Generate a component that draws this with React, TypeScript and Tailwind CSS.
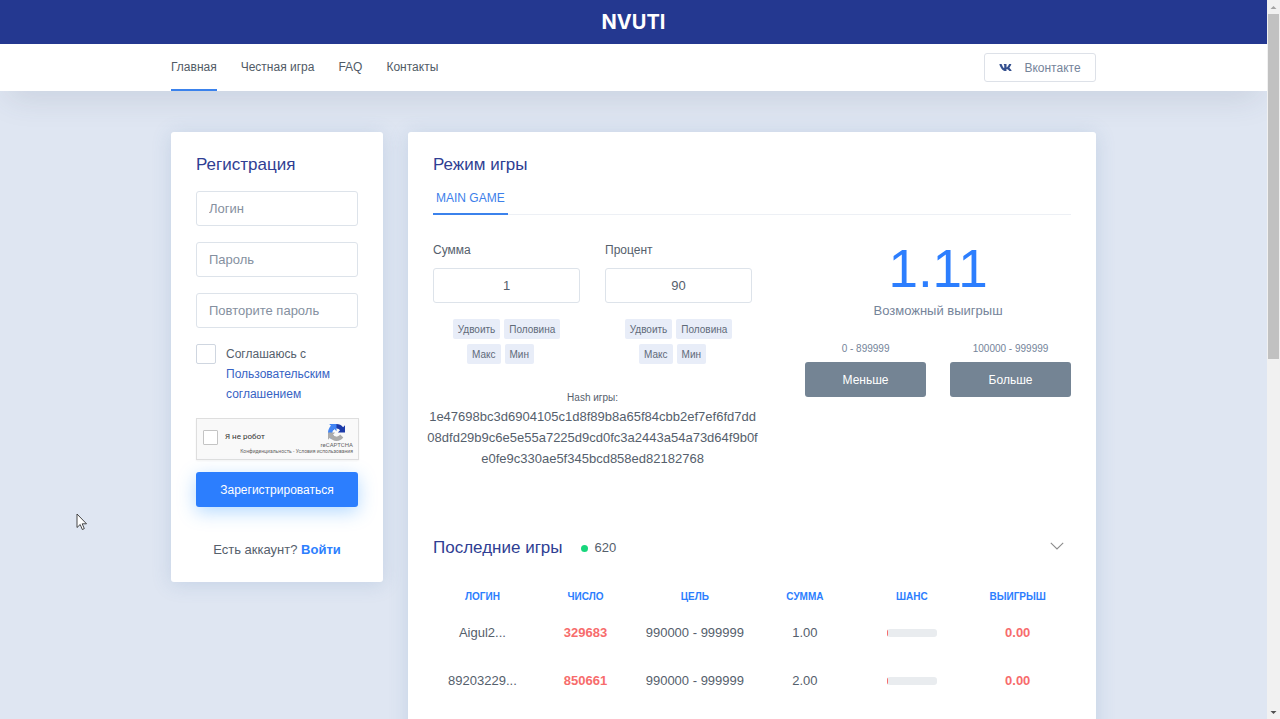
import { useState } from "react";
import { FaVk } from "react-icons/fa";

type Game = {
  login: string;
  number: string;
  target: string;
  sum: string;
  chance: number;
  win: string;
};

const NAV = ["Главная", "Честная игра", "FAQ", "Контакты"];

const GAMES: Game[] = [
  { login: "Aigul2...", number: "329683", target: "990000 - 999999", sum: "1.00", chance: 1, win: "0.00" },
  { login: "89203229...", number: "850661", target: "990000 - 999999", sum: "2.00", chance: 1, win: "0.00" },
];

const HASH_LINES = [
  "1e47698bc3d6904105c1d8f89b8a65f84cbb2ef7ef6fd7dd",
  "08dfd29b9c6e5e55a7225d9cd0fc3a2443a54a73d64f9b0f",
  "e0fe9c330ae5f345bcd858ed82182768",
];

const FIELD =
  "block h-[35px] w-full rounded-[3px] border border-[#dde3ea] bg-white text-[13px] text-[#55606c] outline-none placeholder:text-[#8590a0]";

const CARD = "rounded-[3px] bg-white shadow-[0_2px_20px_rgba(70,115,170,0.18)]";

const CHIP = "h-5 rounded-[2px] bg-[#e8edf8] px-[5px] text-[10px] text-[#5f6a78]";

function Header() {
  return (
    <header>
      <div className="relative z-10 flex h-11 items-center justify-center bg-[#243890]">
        <a href="#" className="font-['Inter',sans-serif] text-xl leading-7 font-bold text-white">
          NVUTI
        </a>
      </div>
      <div className="bg-white shadow-[0_14px_32px_-8px_rgba(60,75,100,0.15)]">
        <div className="mx-auto flex h-[47px] max-w-[925px] items-center justify-between">
          <nav className="flex h-full gap-6 text-xs text-[#515b66]">
            {NAV.map((item, i) => (
              <a
                key={item}
                href="#"
                className={`flex items-center border-b-2 ${i === 0 ? "border-[#3b82ec]" : "border-transparent"}`}
              >
                {item}
              </a>
            ))}
          </nav>
          <a
            href="#"
            className="flex h-[29px] w-28 items-center justify-center gap-3 rounded-[3px] border border-[#dde1e8] text-xs text-[#75849a]"
          >
            <FaVk className="size-[13px] text-[#34508f]" />
            Вконтакте
          </a>
        </div>
      </div>
    </header>
  );
}

function CaptchaLogo() {
  return (
    <svg viewBox="0 0 64 64" className="size-[17px]" aria-hidden="true">
      <path
        d="M64 31.950a33 33 0 0 0-.030-1.370V4.600l-7.180 7.180A31.900 31.900 0 0 0 32.100 0C21.600 0 12.300 5 6.500 12.800l11.770 11.900a15.600 15.600 0 0 1 4.770-5.350c2.060-1.610 4.970-2.920 9-2.920.490 0 .860.060 1.140.160a15.800 15.800 0 0 1 12.200 7.290l-8.330 8.330z"
        fill="#1c3aa9"
      />
      <path
        d="M31.860.010 4.600.040l7.180 7.180A31.900 31.900 0 0 0 0 31.910c0 10.500 5 19.800 12.800 25.600l11.900-11.770a15.600 15.600 0 0 1-5.350-4.770c-1.610-2.060-2.920-4.970-2.920-9 0-.490.060-.860.160-1.140a15.800 15.800 0 0 1 7.290-12.200l8.330 8.330z"
        fill="#4285f4"
      />
      <path
        d="M.010 32v27.360l7.180-7.180A31.900 31.900 0 0 0 31.880 64c10.500 0 19.800-5 25.600-12.800L45.710 39.300a15.600 15.600 0 0 1-4.770 5.350c-2.060 1.610-4.970 2.920-9 2.920-.490 0-.860-.060-1.140-.160a15.800 15.800 0 0 1-12.200-7.290l8.330-8.330z"
        fill="#ababab"
      />
    </svg>
  );
}

function Registration() {
  return (
    <section className={`w-[212px] shrink-0 px-[25px] pt-[21px] pb-[21px] ${CARD}`}>
      <h2 className="text-[17px] leading-6 text-[#2f3e93]">Регистрация</h2>
      <form className="mt-3.5" onSubmit={(e) => e.preventDefault()}>
        <div className="flex flex-col gap-4">
          <input className={`${FIELD} px-3`} type="text" placeholder="Логин" aria-label="Логин" />
          <input className={`${FIELD} px-3`} type="password" placeholder="Пароль" aria-label="Пароль" />
          <input
            className={`${FIELD} px-3`}
            type="password"
            placeholder="Повторите пароль"
            aria-label="Повторите пароль"
          />
        </div>
        <div className="mt-4 flex gap-2.5 text-xs leading-5 text-[#55606c]">
          <input
            id="terms"
            type="checkbox"
            className="size-5 shrink-0 appearance-none rounded-[2px] border border-[#cfd6e0] bg-white checked:bg-[#2c7efe]"
          />
          <label htmlFor="terms">
            Соглашаюсь с{" "}
            <a href="#" className="text-[#3763c4]">
              Пользовательским соглашением
            </a>
          </label>
        </div>
        <div className="mt-3.5 -mr-px flex h-[42px] border border-[#dedede] bg-[#f9f9f9] font-['Roboto',sans-serif] shadow-xs">
          <label className="flex flex-1 items-center gap-[7px] pb-1 pl-1.5 text-[8px] whitespace-nowrap text-[#333]">
            <input
              type="checkbox"
              className="size-[15px] appearance-none rounded-[1px] border border-[#c4c4c4] bg-white checked:bg-[#2c7efe]"
            />
            Я не робот
          </label>
          <div className="flex flex-col items-end pt-[5px] pr-[5px] text-[#666]">
            <div className="flex flex-col items-center">
              <CaptchaLogo />
              <span className="mt-px text-[6px] leading-[6px]">reCAPTCHA</span>
            </div>
            <p className="-ml-24 text-[5px] leading-[7px] whitespace-nowrap">
              <a href="#">Конфиденциальность</a> - <a href="#">Условия использования</a>
            </p>
          </div>
        </div>
        <button
          type="submit"
          className="mt-3 h-[35px] w-full rounded-[3px] bg-[#2c7efe] text-xs text-white shadow-[0_5px_18px_rgba(44,150,255,0.35)]"
        >
          Зарегистрироваться
        </button>
      </form>
      <p className="mt-8 text-center text-[13px] leading-[22px] text-[#55606c]">
        Есть аккаунт?{" "}
        <a href="#" className="font-bold text-[#2c7efe]">
          Войти
        </a>
      </p>
    </section>
  );
}

function BetField({ id, label, initial }: { id: string; label: string; initial: string }) {
  const [value, setValue] = useState(initial);
  return (
    <div>
      <label htmlFor={id} className="block text-xs leading-5 text-[#55606c]">
        {label}
      </label>
      <input
        id={id}
        type="text"
        value={value}
        onChange={(e) => setValue(e.target.value)}
        className={`${FIELD} mt-2 text-center`}
      />
      <div className="mt-4 flex justify-center gap-1">
        <button type="button" className={CHIP}>
          Удвоить
        </button>
        <button type="button" className={CHIP}>
          Половина
        </button>
      </div>
      <div className="mt-[5px] flex justify-center gap-1 pr-3">
        <button type="button" className={CHIP}>
          Макс
        </button>
        <button type="button" className={CHIP}>
          Мин
        </button>
      </div>
    </div>
  );
}

function GameMode() {
  return (
    <section>
      <h2 className="text-[17px] leading-6 text-[#2f3e93]">Режим игры</h2>
      <div className="mt-[9px] flex border-b border-[#edf0f5]">
        <button
          type="button"
          className="-mb-px h-[29px] border-b-2 border-[#3b82ec] px-[3px] pb-1 text-xs text-[#3d80ea]"
        >
          MAIN GAME
        </button>
      </div>
      <div className="mt-[25px] grid grid-cols-[6fr_5fr] gap-[53px]">
        <div className="min-w-0">
          <div className="grid grid-cols-2 gap-[25px]">
            <BetField id="sum" label="Сумма" initial="1" />
            <BetField id="percent" label="Процент" initial="90" />
          </div>
          <div className="-mx-5 mt-[26px] text-center text-[#55606c]">
            <p className="text-[10px] leading-4">Hash игры:</p>
            <p className="text-[13px] leading-[21px]">
              {HASH_LINES.map((line) => (
                <span key={line} className="block">
                  {line}
                </span>
              ))}
            </p>
          </div>
        </div>
        <div className="text-center text-[#75849a]">
          <p className="pb-1 text-[53px] leading-[57px] text-[#2c7efe]">1.11</p>
          <p className="text-[13px] leading-5">Возможный выигрыш</p>
          <div className="mt-5 grid grid-cols-2 gap-6">
            <div>
              <p className="text-[10px] leading-4">0 - 899999</p>
              <button type="button" className="mt-[5px] h-[35px] w-full rounded-[3px] bg-[#748494] text-xs text-white">
                Меньше
              </button>
            </div>
            <div>
              <p className="text-[10px] leading-4">100000 - 999999</p>
              <button type="button" className="mt-[5px] h-[35px] w-full rounded-[3px] bg-[#748494] text-xs text-white">
                Больше
              </button>
            </div>
          </div>
        </div>
      </div>
    </section>
  );
}

function LastGames() {
  return (
    <section className="mt-[67px]">
      <div className="flex items-center">
        <h2 className="text-[17px] leading-6 text-[#2f3e93]">Последние игры</h2>
        <span className="ml-[18px] size-[7px] rounded-full bg-[#17d67c]" />
        <span className="ml-[7px] text-[13px] text-[#55606c]">620</span>
        <button type="button" aria-label="Свернуть" className="mr-[7px] ml-auto pb-1">
          <svg viewBox="0 0 14 8" className="h-2 w-3.5" fill="none" stroke="#8c8c8c" strokeWidth="1.1">
            <path d="M0.800 0.800 7 7l6.200-6.200" />
          </svg>
        </button>
      </div>
      <table className="mt-2.5 w-full table-fixed text-center text-[13px] text-[#55606c]">
        <colgroup>
          <col className="w-[15.5%]" />
          <col className="w-[16.800%]" />
          <col className="w-[17.500%]" />
          <col className="w-[17%]" />
          <col className="w-[16.500%]" />
          <col className="w-[16.700%]" />
        </colgroup>
        <thead>
          <tr className="h-[53px] text-[10px] text-[#2c7efe] uppercase">
            {["Логин", "Число", "Цель", "Сумма", "Шанс", "Выигрыш"].map((title) => (
              <th key={title} className="font-bold">
                {title}
              </th>
            ))}
          </tr>
        </thead>
        <tbody>
          {GAMES.map((game) => (
            <tr key={game.number} className="h-12 align-top leading-5">
              <td>{game.login}</td>
              <td className="font-bold text-[#f76c6c]">{game.number}</td>
              <td>{game.target}</td>
              <td>{game.sum}</td>
              <td>
                <div className="mx-auto mt-[6px] h-2 w-[50px] overflow-hidden rounded-[3px] bg-[#e9ecef]">
                  <div className="h-full min-w-px bg-[#f76c6c]" style={{ width: `${game.chance}%` }} />
                </div>
              </td>
              <td className="font-bold text-[#f76c6c]">{game.win}</td>
            </tr>
          ))}
        </tbody>
      </table>
    </section>
  );
}

function Scrollbar() {
  return (
    <div className="flex w-[13px] shrink-0 flex-col items-center bg-[#f1f1f1]" aria-hidden="true">
      <svg viewBox="0 0 13 14" className="h-3.5 w-[13px]">
        <path d="M3.500 9 6.500 6l3 3z" fill="#a3a3a3" />
      </svg>
      <div className="h-[48%] w-[11px] bg-[#c1c1c1]" />
      <svg viewBox="0 0 13 14" className="mt-auto h-3.5 w-[13px]">
        <path d="M3.500 6h6l-3 3z" fill="#505050" />
      </svg>
    </div>
  );
}

export default function App() {
  return (
    <div className="relative flex h-screen overflow-hidden bg-[#dfe6f2] font-['Liberation_Sans',Arial,sans-serif]">
      <div className="min-w-0 flex-1 overflow-hidden">
        <Header />
        <main className="mx-auto mt-[41px] flex max-w-[925px] items-start gap-[25px]">
          <Registration />
          <div className={`min-w-0 flex-1 px-[25px] pt-[21px] pb-6 ${CARD}`}>
            <GameMode />
            <LastGames />
          </div>
        </main>
      </div>
      <Scrollbar />
      <svg viewBox="0 0 12 19" className="absolute top-[513px] left-[76px] h-[19px] w-3" aria-hidden="true">
        <path
          d="M1 1v13.500l3.200-3 2.100 5 2-.9-2.100-4.800h4.300z"
          fill="#fff"
          stroke="#333"
          strokeWidth="0.900"
          strokeLinejoin="round"
        />
      </svg>
    </div>
  );
}
